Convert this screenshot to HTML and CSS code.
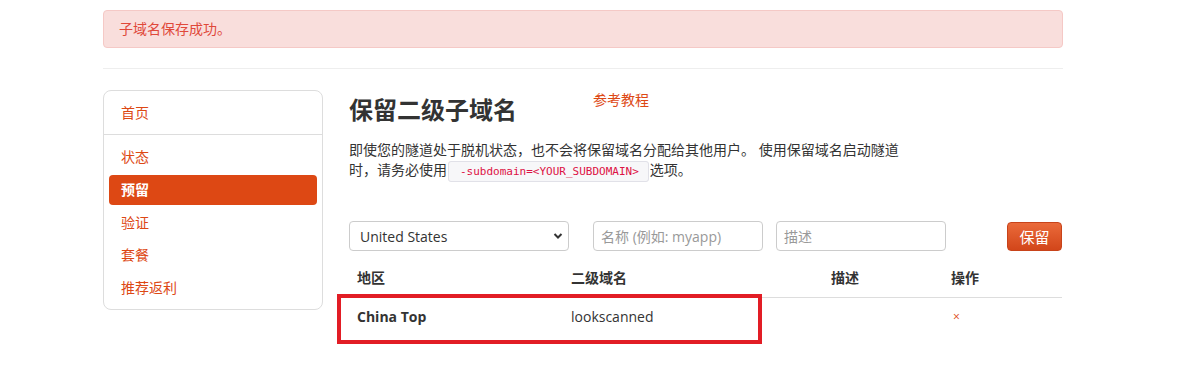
FILE: index.html
```html
<!DOCTYPE html>
<html lang="zh-CN">

<head>
    <meta charset="UTF-8">
    <meta name="viewport" content="width=device-width, initial-scale=1.0">
    <title>保留二级子域名</title>
    <link rel="stylesheet" href="styles.css">
</head>

<body>
    <div class="container">
        <div class="alert">子域名保存成功。</div>
        <hr class="rule">

        <div class="layout">
            <div class="sidebar">
                <a class="side-home" href="#">首页</a>
                <ul class="side-nav">
                    <li><a href="#">状态</a></li>
                    <li class="active"><a href="#">预留</a></li>
                    <li><a href="#">验证</a></li>
                    <li><a href="#">套餐</a></li>
                    <li><a href="#">推荐返利</a></li>
                </ul>
            </div>

            <div class="main">
                <div class="title-row">
                    <h2>保留二级子域名</h2>
                    <a class="tutorial" href="#">参考教程</a>
                </div>
                <p class="intro">即使您的隧道处于脱机状态，也不会将保留域名分配给其他用户。 使用保留域名启动隧道时，请务必使用<code>-subdomain=&lt;YOUR_SUBDOMAIN&gt;</code>选项。</p>

                <form class="reserve-form">
                    <div class="select-wrap">
                        <select>
                            <option>United States</option>
                            <option>China Top</option>
                        </select>
                        <svg class="chevron" width="10" height="8" viewBox="0 0 10 8">
                            <path d="M1.5 2 L5 5.5 L8.5 2" fill="none" stroke="#333" stroke-width="2"/>
                        </svg>
                    </div>
                    <input class="name" type="text" placeholder="名称 (例如: myapp)">
                    <input class="desc" type="text" placeholder="描述">
                    <button type="submit">保留</button>
                </form>

                <div class="table-wrap">
                    <table>
                        <thead>
                            <tr>
                                <th class="col-region">地区</th>
                                <th class="col-domain">二级域名</th>
                                <th class="col-desc">描述</th>
                                <th>操作</th>
                            </tr>
                        </thead>
                        <tbody>
                            <tr>
                                <td class="region">China Top</td>
                                <td>lookscanned</td>
                                <td></td>
                                <td><a class="remove" href="#">×</a></td>
                            </tr>
                        </tbody>
                    </table>
                    <div class="highlight"></div>
                </div>
            </div>
        </div>
    </div>
</body>

</html>
```

FILE: styles.css
```css
body {
    margin: 0;
    font-family: "Open Sans", "Noto Sans CJK SC", sans-serif;
    font-size: 14px;
    line-height: 20px;
    color: #333333;
    background-color: #ffffff;
}

a {
    color: #dd4814;
    text-decoration: none;
}

.container {
    width: 960px;
    margin-left: 103px;
    padding-top: 10px;
    padding-bottom: 30px;
}

.alert {
    background-color: #f9dedc;
    border: 1px solid #f5c9c6;
    border-radius: 4px;
    color: #e0483a;
    padding: 8px 15px;
    height: 20px;
}

.rule {
    border: 0;
    border-top: 1px solid #eeeeee;
    margin: 20px 0 21px;
}

.layout {
    display: flex;
    gap: 26px;
}

/* menu de gauche */
.sidebar {
    width: 218px;
    height: 218px;
    border: 1px solid #dddddd;
    border-radius: 8px;
    flex-shrink: 0;
}

.side-home {
    display: block;
    padding: 12px 17px 11px;
    border-bottom: 1px solid #dddddd;
}

.side-nav {
    list-style: none;
    margin: 0;
    padding: 7px 5px 0;
}

.side-nav li {
    margin-bottom: 2.75px;
}

.side-nav a {
    display: block;
    height: 30px;
    line-height: 30px;
    padding-left: 12px;
    border-radius: 4px;
}

.side-nav .active a {
    background-color: #dd4814;
    color: #ffffff;
    font-weight: bold;
}

/* contenu */
.main {
    width: 713px;
}

.title-row {
    display: flex;
    align-items: flex-start;
}

.title-row h2 {
    margin: 0;
    font-size: 24px;
    line-height: 40px;
    font-weight: bold;
    width: 244px;
}

.tutorial {
    line-height: 20px;
}

.intro {
    margin: 10px 0 0;
    width: 555px;
}

.intro code {
    font-family: "DejaVu Sans Mono", "Liberation Mono", monospace;
    font-size: 11px;
    line-height: 1;
    color: #dd1144;
    background-color: #f7f7f9;
    border: 1px solid #e1e1e8;
    border-radius: 3px;
    padding: 3px 9px 3px 11px;
    margin: 0 1px 0 1px;
}

.reserve-form {
    display: flex;
    align-items: center;
    margin-top: 41px;
    height: 30px;
}

.select-wrap {
    position: relative;
    width: 220px;
    height: 30px;
    margin-right: 24px;
}

.select-wrap select {
    appearance: none;
    -webkit-appearance: none;
    width: 100%;
    height: 30px;
    border: 1px solid #cccccc;
    border-radius: 4px;
    background-color: #ffffff;
    padding: 0 10px;
    font-family: inherit;
    font-size: 14px;
    color: #333333;
}

.chevron {
    position: absolute;
    right: 6px;
    top: 11px;
    pointer-events: none;
}

.reserve-form input {
    width: 170px;
    height: 30px;
    box-sizing: border-box;
    border: 1px solid #cccccc;
    border-radius: 4px;
    padding: 0 7px;
    font-family: inherit;
    font-size: 14px;
    color: #333333;
}

.reserve-form input::placeholder {
    color: #999999;
}

.reserve-form .name {
    margin-right: 13px;
}

.reserve-form button {
    margin-left: auto;
    height: 29px;
    width: 55px;
    border: 1px solid #c8431a;
    border-radius: 4px;
    background: linear-gradient(#ea6a3a, #d2461a);
    color: #ffffff;
    font-family: inherit;
    font-size: 15px;
    cursor: pointer;
}

/* tableau */
.table-wrap {
    position: relative;
    margin-top: 8px;
}

table {
    width: 100%;
    border-collapse: collapse;
}

th {
    text-align: left;
    font-weight: bold;
    padding: 9px 8px;
    border-bottom: 1px solid #dddddd;
}

td {
    padding: 8px 8px;
}

.col-region {
    width: 198px;
}

.col-domain {
    width: 244px;
}

.col-desc {
    width: 104px;
}

.region {
    font-weight: bold;
}

.remove {
    font-size: 12px;
    margin-left: 2px;
}

.highlight {
    position: absolute;
    left: -12px;
    top: 35px;
    width: 417px;
    height: 42px;
    border: 4px solid #e21d25;
}
```
